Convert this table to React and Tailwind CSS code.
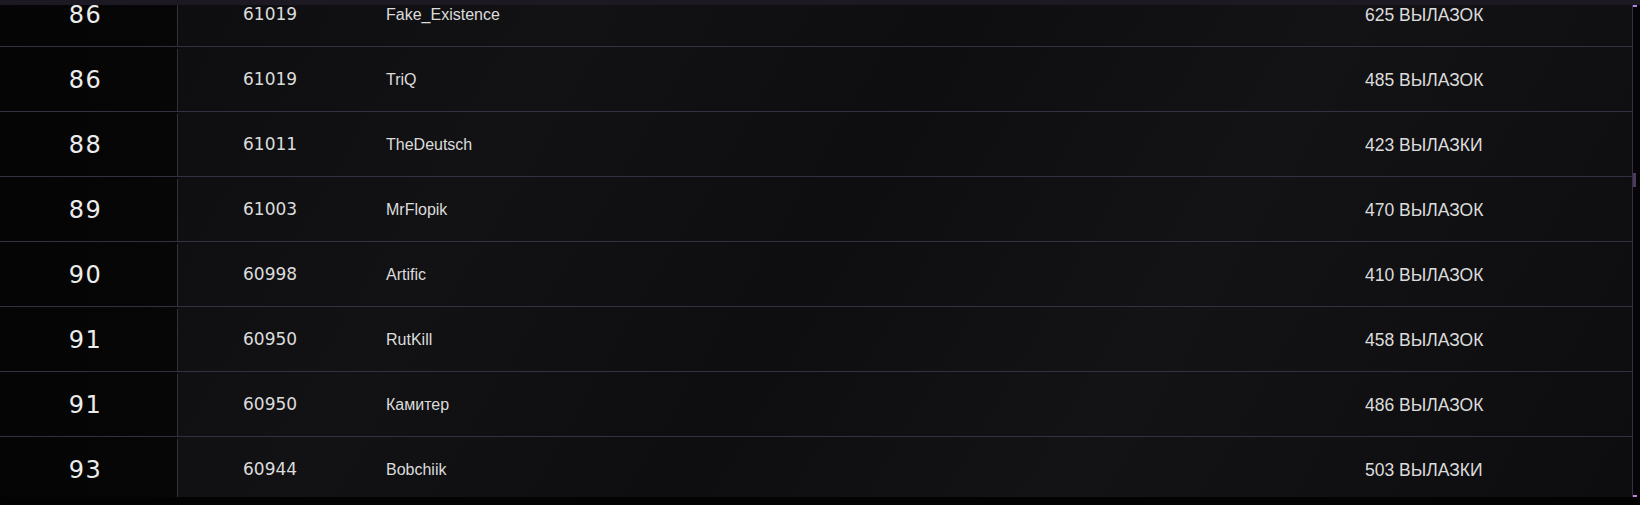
import React from 'react';

const rows = [
  { rank: 86, score: '61019', name: 'Fake_Existence', raids: '625 ВЫЛАЗОК' },
  { rank: 86, score: '61019', name: 'TriQ', raids: '485 ВЫЛАЗОК' },
  { rank: 88, score: '61011', name: 'TheDeutsch', raids: '423 ВЫЛАЗКИ' },
  { rank: 89, score: '61003', name: 'MrFlopik', raids: '470 ВЫЛАЗОК' },
  { rank: 90, score: '60998', name: 'Artific', raids: '410 ВЫЛАЗОК' },
  { rank: 91, score: '60950', name: 'RutKill', raids: '458 ВЫЛАЗОК' },
  { rank: 91, score: '60950', name: 'Камитер', raids: '486 ВЫЛАЗОК' },
  { rank: 93, score: '60944', name: 'Bobchiik', raids: '503 ВЫЛАЗКИ' },
];

function Row({ row }) {
  return (
    <div className="grid h-[65px] grid-cols-[178px_208px_979px_1fr] border-b border-[#372e40] pt-[2px]">
      <div className="flex items-center justify-center border-r border-[#372e40] pr-[6px] font-['DejaVu_Sans',sans-serif] text-[24px] tracking-[1.5px] text-[#ececec]">
        {row.rank}
      </div>
      <div className="flex items-center pl-[65px] font-['DejaVu_Sans',sans-serif] text-[17px] text-[#dcdcdc]">
        {row.score}
      </div>
      <div className="flex items-center font-['Liberation_Sans',sans-serif] text-[16px] text-[#dcdcdc]">
        {row.name}
      </div>
      <div className="flex items-center font-['Liberation_Sans',sans-serif] text-[17.5px] text-[#dcdcdc]">
        {row.raids}
      </div>
    </div>
  );
}

export default function App() {
  return (
    <div className="flex h-[505px] w-full flex-col overflow-hidden bg-[#030303]">
      <div className="h-[5px] bg-[#1c1922]" />
      <div className="flex h-[492px]">
        <div className="flex min-w-0 flex-1 overflow-hidden border-r border-[#372e40] bg-[linear-gradient(120deg,#0c0c0e_0%,#121214_30%,#0e0e10_50%,#131315_70%,#0d0d0f_100%)]">
          <div className="w-full -mt-[23px] bg-[linear-gradient(90deg,#050505_0px,#060606_177px,transparent_177px)]">
            {rows.map((row, i) => (
              <Row key={i} row={row} />
            ))}
          </div>
        </div>
        <div className="relative w-[7px] bg-[#050407]">
          <div className="absolute left-0 top-0 h-[2px] w-[4px] bg-[#b784e0]" />
          <div className="absolute left-0 top-[168px] h-[14px] w-[3px] bg-[#4d3b5e]" />
          <div className="absolute bottom-0 left-0 h-[2px] w-[4px] bg-[#b784e0]" />
        </div>
      </div>
    </div>
  );
}
